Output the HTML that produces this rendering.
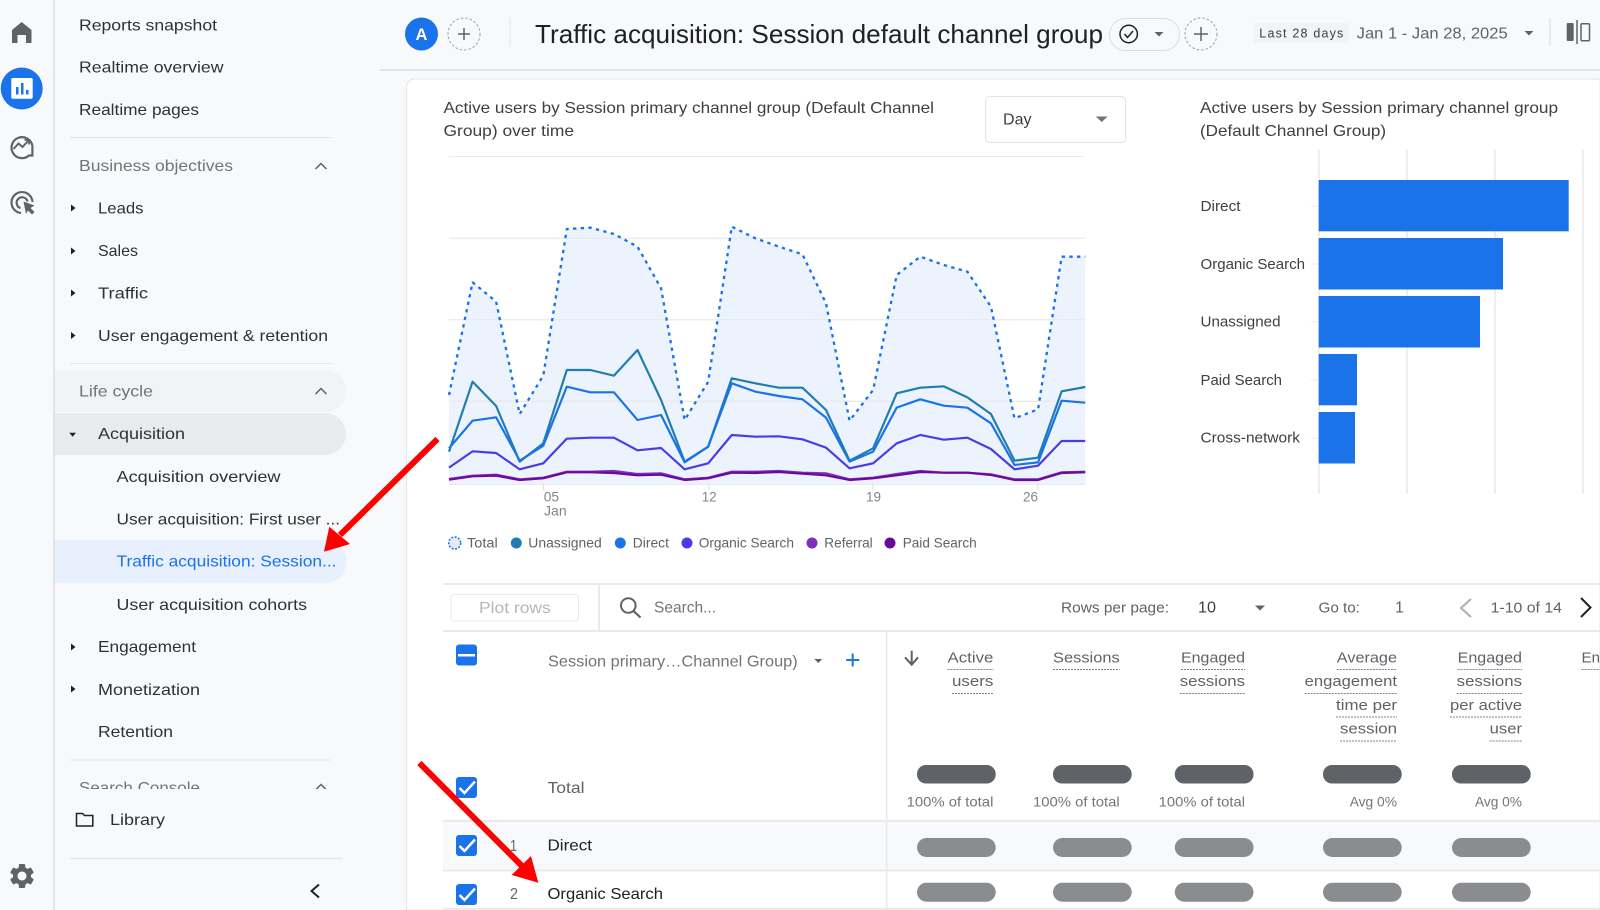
<!DOCTYPE html>
<html lang="en">
<head>
<meta charset="utf-8">
<title>Traffic acquisition</title>
<style>
html,body{margin:0;padding:0;background:#f8f9fb;width:1600px;height:910px;overflow:hidden}
svg{display:block}
text{font-family:"Liberation Sans",sans-serif;white-space:pre}
.s{font-size:16px;fill:#2f3134}
.g{font-size:16px;fill:#70757a}
.c{font-size:16px;fill:#3c4043}
.b{font-size:14.5px;fill:#3c4043}
.l{font-size:14px;fill:#5f6368}
.a{font-size:14px;fill:#80868b}
.t{font-size:15px;fill:#5f6368}
.h{font-size:15px;fill:#5f6368}
.p{font-size:14px;fill:#70757a}
.d{stroke:#80868b;stroke-width:1;stroke-dasharray:2 1}
.r{stroke:#e8eaed;stroke-width:2}
</style>
</head>
<body>
<svg width="1600" height="910" viewBox="0 0 1600 910" xmlns="http://www.w3.org/2000/svg">
<defs>
<clipPath id="sc"><rect x="60" y="770" width="300" height="19"/></clipPath>
</defs>
<rect width="1600" height="910" fill="#f8f9fb"/>

<!-- rail -->
<line x1="54" y1="0" x2="54" y2="910" stroke="#dadce0" stroke-width="1.5"/>
<path d="M21.7 22 L31.5 30 V43 H26 V35 H17.5 V43 H12 V30Z" fill="#5f6368"/>
<circle cx="21.7" cy="88.5" r="21" fill="#1a73e8"/>
<rect x="11.3" y="78" width="21.4" height="20.8" rx="1.5" fill="#fff"/>
<rect x="16" y="87" width="2.5" height="7.5" fill="#1a73e8"/>
<rect x="21" y="83" width="2.5" height="11.5" fill="#1a73e8"/>
<rect x="26" y="90" width="2.5" height="4.5" fill="#1a73e8"/>
<path d="M29 155.5 A10.5 10.5 0 1 1 32.4 146 V155.5 Z" fill="none" stroke="#5f6368" stroke-width="2.2"/>
<path d="M13.5 149 L18.5 143.5 L22.5 147 L28.5 140.5" fill="none" stroke="#5f6368" stroke-width="2"/>
<path d="M24.5 140 H29 V144.5" fill="none" stroke="#5f6368" stroke-width="1.8"/>
<path d="M21 213 A10.5 10.5 0 1 1 32.5 202" fill="none" stroke="#5f6368" stroke-width="2.2"/>
<path d="M20.5 208 A5.5 5.5 0 1 1 27.5 201.5" fill="none" stroke="#5f6368" stroke-width="2.2"/>
<path d="M23.5 201.5 L34.5 205.5 L30.5 208 L34.5 212 L32 214.5 L28 210.5 L26 214Z" fill="#5f6368"/>
<g transform="translate(7 861) scale(1.25)"><path fill="#5f6368" d="M19.14 12.94c.04-.3.06-.61.06-.94 0-.32-.02-.64-.07-.94l2.03-1.58c.18-.14.23-.41.12-.61l-1.92-3.32c-.12-.22-.37-.29-.59-.22l-2.39.96c-.5-.38-1.03-.7-1.62-.94l-.36-2.54c-.04-.24-.24-.41-.48-.41h-3.84c-.24 0-.43.17-.47.41l-.36 2.54c-.59.24-1.13.57-1.62.94l-2.39-.96c-.22-.08-.47 0-.59.22L2.74 8.87c-.12.21-.08.47.12.61l2.03 1.58c-.05.3-.09.63-.09.94s.02.64.07.94l-2.03 1.58c-.18.14-.23.41-.12.61l1.92 3.32c.12.22.37.29.59.22l2.39-.96c.5.38 1.03.7 1.62.94l.36 2.54c.05.24.24.41.48.41h3.84c.24 0 .44-.17.47-.41l.36-2.54c.59-.24 1.13-.56 1.62-.94l2.39.96c.22.08.47 0 .59-.22l1.92-3.32c.12-.22.07-.47-.12-.61l-2.01-1.58zM12 15.6c-1.98 0-3.6-1.62-3.6-3.6s1.62-3.6 3.6-3.6 3.6 1.62 3.6 3.6-1.62 3.6-3.6 3.6z"/></g>

<!-- sidebar highlights -->
<path d="M55 370 H325 A21 21 0 0 1 325 412 H55Z" fill="#f1f3f4"/>
<path d="M55 413 H325 A21 21 0 0 1 325 455 H55Z" fill="#e8eaed"/>
<path d="M55 540 H325 A21.5 21.5 0 0 1 325 583 H55Z" fill="#e8f0fe"/>

<!-- sidebar text -->
<text class="s" x="79" y="30.5" textLength="138" lengthAdjust="spacingAndGlyphs">Reports snapshot</text>
<text class="s" x="79" y="72.7" textLength="144.5" lengthAdjust="spacingAndGlyphs">Realtime overview</text>
<text class="s" x="79" y="115" textLength="120" lengthAdjust="spacingAndGlyphs">Realtime pages</text>
<line x1="70" y1="137.5" x2="331" y2="137.5" stroke="#e3e5e8" stroke-width="1"/>
<text class="g" x="79" y="171" textLength="154" lengthAdjust="spacingAndGlyphs">Business objectives</text>
<polyline points="315.5,169 321,163.5 326.5,169" fill="none" stroke="#5f6368" stroke-width="1.5"/>
<path d="M71 204.5 L75.5 208 L71 211.5Z M71 247.5 L75.5 251 L71 254.5Z M71 289.5 L75.5 293 L71 296.5Z M71 332 L75.5 335.5 L71 339Z M71 643.5 L75.5 647 L71 650.5Z M71 685.5 L75.5 689 L71 692.5Z" fill="#202124"/>
<text class="s" x="98" y="213.5" textLength="45.5" lengthAdjust="spacingAndGlyphs">Leads</text>
<text class="s" x="98" y="256" textLength="40" lengthAdjust="spacingAndGlyphs">Sales</text>
<text class="s" x="98" y="298.5" textLength="50" lengthAdjust="spacingAndGlyphs">Traffic</text>
<text class="s" x="98" y="341" textLength="230" lengthAdjust="spacingAndGlyphs">User engagement &amp; retention</text>
<line x1="70" y1="363.5" x2="331" y2="363.5" stroke="#e3e5e8" stroke-width="1"/>
<text class="g" x="79" y="396.7" textLength="74" lengthAdjust="spacingAndGlyphs">Life cycle</text>
<polyline points="315.5,394 321,388.5 326.5,394" fill="none" stroke="#5f6368" stroke-width="1.5"/>
<path d="M69.3 432.7 H76 L72.6 436.7Z" fill="#202124"/>
<text class="s" x="98" y="439" textLength="87" lengthAdjust="spacingAndGlyphs">Acquisition</text>
<text class="s" x="116.5" y="482" textLength="164" lengthAdjust="spacingAndGlyphs">Acquisition overview</text>
<text class="s" x="116.5" y="524.7" textLength="223.5" lengthAdjust="spacingAndGlyphs">User acquisition: First user ...</text>
<text x="116.5" y="566.6" font-size="16" fill="#1a73e8" textLength="220" lengthAdjust="spacingAndGlyphs">Traffic acquisition: Session...</text>
<text class="s" x="116.5" y="610" textLength="190.5" lengthAdjust="spacingAndGlyphs">User acquisition cohorts</text>
<text class="s" x="98" y="652" textLength="98" lengthAdjust="spacingAndGlyphs">Engagement</text>
<text class="s" x="98" y="695" textLength="102" lengthAdjust="spacingAndGlyphs">Monetization</text>
<text class="s" x="98" y="737" textLength="75" lengthAdjust="spacingAndGlyphs">Retention</text>
<line x1="70" y1="760" x2="331" y2="760" stroke="#e3e5e8" stroke-width="1"/>
<g clip-path="url(#sc)">
<text class="g" x="79" y="793" textLength="121" lengthAdjust="spacingAndGlyphs">Search Console</text>
<polyline points="316,789.5 321,784.5 326,789.5" fill="none" stroke="#5f6368" stroke-width="1.5"/>
</g>
<path d="M76.5 813.5 H82.5 L84.5 815.5 H92.8 V826 H76.5Z" fill="none" stroke="#202124" stroke-width="1.5"/>
<text class="s" x="110" y="825" textLength="55" lengthAdjust="spacingAndGlyphs">Library</text>
<line x1="70" y1="858.5" x2="342" y2="858.5" stroke="#e3e5e8" stroke-width="1.2"/>
<polyline points="319,884.5 311.5,891 319,897.5" fill="none" stroke="#202124" stroke-width="2"/>

<!-- header -->
<line x1="380" y1="70" x2="1600" y2="70" stroke="#dadce0" stroke-width="1.5"/>
<circle cx="421.5" cy="34" r="16.5" fill="#1a73e8"/>
<text x="421.5" y="39.8" font-size="16.5" font-weight="bold" fill="#fff" text-anchor="middle">A</text>
<circle cx="464" cy="34" r="16" fill="none" stroke="#9aa0a6" stroke-width="1" stroke-dasharray="2.5 2"/>
<path d="M458 34 H470 M464 28 V40" stroke="#5f6368" stroke-width="1.5" fill="none"/>
<line x1="510" y1="18" x2="510" y2="46" stroke="#e3e5e8" stroke-width="1"/>
<text x="535" y="43" font-size="26" fill="#202124" textLength="568" lengthAdjust="spacingAndGlyphs">Traffic acquisition: Session default channel group</text>
<rect x="1109.5" y="18.5" width="70" height="32" rx="16" fill="#f8f9fb" stroke="#dadce0"/>
<circle cx="1128.7" cy="34" r="8.7" fill="none" stroke="#202124" stroke-width="1.5"/>
<polyline points="1124.5,34 1127.5,37.5 1133,31" fill="none" stroke="#202124" stroke-width="1.5"/>
<path d="M1154.5 32 H1163.5 L1159 36.5Z" fill="#5f6368"/>
<circle cx="1201" cy="34" r="16" fill="none" stroke="#9aa0a6" stroke-width="1" stroke-dasharray="2.5 2"/>
<path d="M1194 34 H1208 M1201 27 V41" stroke="#5f6368" stroke-width="1.5" fill="none"/>
<rect x="1254" y="23" width="95" height="20" fill="#f1f3f4"/>
<text x="1259.3" y="37.7" font-size="12.5" fill="#3c4043" textLength="84" lengthAdjust="spacing">Last 28 days</text>
<text x="1356.7" y="38.7" font-size="16" fill="#5f6368" textLength="151" lengthAdjust="spacingAndGlyphs">Jan 1 - Jan 28, 2025</text>
<path d="M1524.5 31 H1533.5 L1529 35.5Z" fill="#5f6368"/>
<line x1="1550" y1="18" x2="1550" y2="46" stroke="#dadce0" stroke-width="1"/>
<rect x="1566.7" y="23" width="7" height="18" rx="1" fill="#5f6368"/>
<line x1="1577" y1="20" x2="1577" y2="44" stroke="#5f6368" stroke-width="1.5"/>
<rect x="1581" y="23.7" width="8.5" height="17" rx="1" fill="none" stroke="#5f6368" stroke-width="1.5"/>

<!-- card -->
<path d="M406.5 910 V87 A8 8 0 0 1 414.5 79 H1600 V910Z" fill="#fff" stroke="#e3e5e8" stroke-width="1"/>
<text class="c" x="443.5" y="113" textLength="490.5" lengthAdjust="spacingAndGlyphs">Active users by Session primary channel group (Default Channel</text>
<text class="c" x="443.5" y="136" textLength="130.5" lengthAdjust="spacingAndGlyphs">Group) over time</text>
<rect x="985.5" y="96.5" width="140" height="46" rx="4" fill="#fff" stroke="#e0e2e5"/>
<text class="c" x="1003" y="124.3" textLength="28.5" lengthAdjust="spacingAndGlyphs">Day</text>
<path d="M1095.7 116.5 H1107.7 L1101.7 122Z" fill="#70757a"/>
<line x1="449" y1="156.5" x2="1084" y2="156.5" stroke="#e8eaed" stroke-width="1"/>

<!-- line chart (coords in zoomed space) -->
<g transform="matrix(.33423 0 0 .33333 439.976 210)">
<path fill="#edf3fc" d="M27 555 L97.5 217 168 275 238.5 612 309 497 379.5 57 450 53 520.5 72 591 110 661.5 235 732 630 802.5 515 873 50 943.5 85 1014 110 1084.5 133 1155 280 1225.5 632 1296 540 1366.5 195 1437 140 1507.5 165 1578 185 1648.5 290 1719 625 1789.5 598 1860 140 1930.5 140 V822 H27Z"/>
<g stroke="#e8eaed" stroke-width="4" opacity=".9">
<line x1="27" y1="85" x2="1930" y2="85"/><line x1="27" y1="329" x2="1930" y2="329"/><line x1="27" y1="574" x2="1930" y2="574"/>
</g>
<g fill="none" stroke-linejoin="round">
<polyline stroke="#1a73e8" stroke-width="7" stroke-dasharray="10 13" points="27,555 97.5,217 168,275 238.5,612 309,497 379.5,57 450,53 520.5,72 591,110 661.5,235 732,630 802.5,515 873,50 943.5,85 1014,110 1084.5,133 1155,280 1225.5,632 1296,540 1366.5,195 1437,140 1507.5,165 1578,185 1648.5,290 1719,625 1789.5,598 1860,140 1930.5,140"/>
<polyline stroke="#1f7db0" stroke-width="6.5" points="27,725 97.5,515 168,588 238.5,755 309,700 379.5,480 450,480 520.5,497 591,420 661.5,570 732,755 802.5,710 873,505 943.5,520 1014,533 1084.5,533 1155,600 1225.5,752 1296,715 1366.5,550 1437,533 1507.5,529 1578,562 1648.5,612 1719,752 1789.5,743 1860,544 1930.5,531"/>
<polyline stroke="#1a73e8" stroke-width="6.5" points="27,715 97.5,632 168,622 238.5,752 309,707 379.5,530 450,547 520.5,547 591,630 661.5,615 732,757 802.5,710 873,520 943.5,545 1014,558 1084.5,568 1155,623 1225.5,755 1296,725 1366.5,593 1437,568 1507.5,587 1578,593 1648.5,640 1719,765 1789.5,757 1860,572 1930.5,578"/>
<polyline stroke="#4a3be8" stroke-width="6.5" points="27,773 97.5,724 168,729 238.5,778 309,760 379.5,686 450,683 520.5,683 591,721 661.5,714 732,778 802.5,760 873,675 943.5,680 1014,679 1084.5,688 1155,713 1225.5,775 1296,760 1366.5,700 1437,675 1507.5,689 1578,683 1648.5,717 1719,778 1789.5,767 1860,693 1930.5,693"/>
<polyline stroke="#7b2fbb" stroke-width="6.5" points="27,807 97.5,797 168,794 238.5,808 309,803 379.5,785 450,785 520.5,783 591,792 661.5,790 732,808 802.5,803 873,785 943.5,785 1014,783 1084.5,788 1155,790 1225.5,808 1296,803 1366.5,792 1437,783 1507.5,788 1578,788 1648.5,793 1719,808 1789.5,808 1860,787 1930.5,785"/>
<polyline stroke="#6a0a9c" stroke-width="6.5" points="27,809 97.5,799 168,797 238.5,810 309,805 379.5,787 450,787 520.5,789 591,796 661.5,794 732,810 802.5,805 873,788 943.5,789 1014,786 1084.5,791 1155,796 1225.5,810 1296,805 1366.5,796 1437,786 1507.5,788 1578,788 1648.5,795 1719,810 1789.5,810 1860,789 1930.5,787"/>
</g>
</g>
<line x1="449" y1="484.5" x2="1085" y2="484.5" stroke="#e8eaed" stroke-width="1"/>
<path d="M543.5 484 V490 M709 484 V490 M873 484 V490 M1038 484 V490" stroke="#dadce0" stroke-width="1"/>
<text class="a" x="543.7" y="501.7" textLength="15.3" lengthAdjust="spacingAndGlyphs">05</text>
<text class="a" x="544" y="515.7" textLength="22.7" lengthAdjust="spacingAndGlyphs">Jan</text>
<text class="a" x="701.7" y="501.7" textLength="15" lengthAdjust="spacingAndGlyphs">12</text>
<text class="a" x="866" y="501.7" textLength="15" lengthAdjust="spacingAndGlyphs">19</text>
<text class="a" x="1023" y="501.7" textLength="15" lengthAdjust="spacingAndGlyphs">26</text>

<!-- legend -->
<circle cx="454.7" cy="543" r="6" fill="#e8eaed" stroke="#1a73e8" stroke-width="1.5" stroke-dasharray="2 1.5"/>
<text class="l" x="467" y="547.7" textLength="30.7" lengthAdjust="spacingAndGlyphs">Total</text>
<circle cx="516.3" cy="543" r="5.5" fill="#1f7db0"/>
<text class="l" x="528.3" y="547.7" textLength="73.4" lengthAdjust="spacingAndGlyphs">Unassigned</text>
<circle cx="620.3" cy="543" r="5.5" fill="#1a73e8"/>
<text class="l" x="632.7" y="547.7" textLength="36.3" lengthAdjust="spacingAndGlyphs">Direct</text>
<circle cx="687" cy="543" r="5.5" fill="#4a3be8"/>
<text class="l" x="698.7" y="547.7" textLength="95.3" lengthAdjust="spacingAndGlyphs">Organic Search</text>
<circle cx="812" cy="543" r="5.5" fill="#7b2fbb"/>
<text class="l" x="824.3" y="547.7" textLength="48.4" lengthAdjust="spacingAndGlyphs">Referral</text>
<circle cx="890" cy="543" r="5.5" fill="#6a0a9c"/>
<text class="l" x="902.7" y="547.7" textLength="74" lengthAdjust="spacingAndGlyphs">Paid Search</text>

<!-- bar chart -->
<text class="c" x="1200" y="113" textLength="358" lengthAdjust="spacingAndGlyphs">Active users by Session primary channel group</text>
<text class="c" x="1200" y="136" textLength="186" lengthAdjust="spacingAndGlyphs">(Default Channel Group)</text>
<path d="M1319 150 V494 M1407 150 V494 M1495 150 V494 M1583 150 V494" stroke="#e8e8e8" stroke-width="1.5"/>
<path d="M1311 206 H1319 M1311 264 H1319 M1311 322 H1319 M1311 380 H1319 M1311 438 H1319" stroke="#e8eaed" stroke-width="1"/>
<g fill="#1a73e8">
<rect x="1318.7" y="180" width="250" height="51.3"/>
<rect x="1318.7" y="238" width="184.3" height="51.5"/>
<rect x="1318.7" y="296" width="161.3" height="51.5"/>
<rect x="1318.7" y="354" width="38.3" height="51.3"/>
<rect x="1318.7" y="412" width="36.3" height="51.5"/>
</g>
<text class="b" x="1200.5" y="211" textLength="40" lengthAdjust="spacingAndGlyphs">Direct</text>
<text class="b" x="1200.5" y="269" textLength="104.5" lengthAdjust="spacingAndGlyphs">Organic Search</text>
<text class="b" x="1200.5" y="326.7" textLength="80" lengthAdjust="spacingAndGlyphs">Unassigned</text>
<text class="b" x="1200.5" y="385" textLength="81.5" lengthAdjust="spacingAndGlyphs">Paid Search</text>
<text class="b" x="1200.5" y="442.7" textLength="99.5" lengthAdjust="spacingAndGlyphs">Cross-network</text>

<!-- table toolbar -->
<line x1="443" y1="584" x2="1600" y2="584" class="r"/>
<line x1="443" y1="631" x2="1600" y2="631" class="r"/>
<line x1="599" y1="585" x2="599" y2="630" class="r"/>
<rect x="451" y="594.5" width="127.5" height="26.5" rx="3" fill="#fff" stroke="#e8eaed"/>
<text x="479" y="612.8" font-size="16" fill="#b4b6ba" textLength="71.7" lengthAdjust="spacingAndGlyphs">Plot rows</text>
<circle cx="628.3" cy="605.5" r="7.3" fill="none" stroke="#5f6368" stroke-width="2"/>
<line x1="633.5" y1="611" x2="640.5" y2="617.5" stroke="#5f6368" stroke-width="2.2"/>
<text x="654" y="612.6" font-size="16" fill="#70757a" textLength="62" lengthAdjust="spacingAndGlyphs">Search...</text>
<text class="t" x="1061" y="612.4" textLength="108" lengthAdjust="spacingAndGlyphs">Rows per page:</text>
<text x="1198" y="612.6" font-size="16" fill="#3c4043" textLength="18" lengthAdjust="spacingAndGlyphs">10</text>
<path d="M1255 605.5 H1265 L1260 610.5Z" fill="#5f6368"/>
<text class="t" x="1318.5" y="612.4" textLength="41.5" lengthAdjust="spacingAndGlyphs">Go to:</text>
<text x="1395" y="612.6" font-size="16" fill="#5f6368">1</text>
<polyline points="1471,599 1461,608 1471,617" fill="none" stroke="#a9adb2" stroke-width="2"/>
<text class="t" x="1490.6" y="612.4" textLength="71.4" lengthAdjust="spacingAndGlyphs">1-10 of 14</text>
<polyline points="1581,598 1590.5,607.5 1581,617" fill="none" stroke="#202124" stroke-width="2"/>

<!-- table header -->
<line x1="886.7" y1="631" x2="886.7" y2="910" stroke="#e8eaed" stroke-width="1.5"/>
<rect x="456" y="644.5" width="21" height="21" rx="3" fill="#1a73e8"/>
<rect x="458" y="654" width="17" height="2.5" fill="#fff"/>
<text class="g" x="548" y="666.7" textLength="249.7" lengthAdjust="spacingAndGlyphs">Session primary…Channel Group)</text>
<path d="M814.3 659 H822.3 L818.3 663Z" fill="#5f6368"/>
<path d="M846.2 660 H859.2 M852.7 653.5 V666.5" stroke="#1a73e8" stroke-width="2" fill="none"/>
<path d="M911.7 650.7 V664.5 M905 657.3 L911.7 664.7 L918 657.3" stroke="#5f6368" stroke-width="2" fill="none"/>

<text class="h" x="947.5" y="662.4" textLength="45.9" lengthAdjust="spacingAndGlyphs">Active</text>
<line x1="947.5" y1="669.5" x2="993.4" y2="669.5" class="d"/>
<text class="h" x="952" y="686.2" textLength="41.4" lengthAdjust="spacingAndGlyphs">users</text>
<line x1="952" y1="693.5" x2="993.4" y2="693.5" class="d"/>
<text class="h" x="1053" y="662.4" textLength="66.7" lengthAdjust="spacingAndGlyphs">Sessions</text>
<line x1="1053" y1="669.5" x2="1119.7" y2="669.5" class="d"/>
<text class="h" x="1181" y="662.4" textLength="64" lengthAdjust="spacingAndGlyphs">Engaged</text>
<line x1="1181" y1="669.5" x2="1245" y2="669.5" class="d"/>
<text class="h" x="1179.8" y="686.2" textLength="65.2" lengthAdjust="spacingAndGlyphs">sessions</text>
<line x1="1179.8" y1="693.5" x2="1245" y2="693.5" class="d"/>
<text class="h" x="1336.8" y="662.4" textLength="60.2" lengthAdjust="spacingAndGlyphs">Average</text>
<line x1="1336.8" y1="669.5" x2="1397" y2="669.5" class="d"/>
<text class="h" x="1304.7" y="686.2" textLength="92.3" lengthAdjust="spacingAndGlyphs">engagement</text>
<line x1="1304.7" y1="693.5" x2="1397" y2="693.5" class="d"/>
<text class="h" x="1336" y="710.2" textLength="61" lengthAdjust="spacingAndGlyphs">time per</text>
<line x1="1336" y1="717" x2="1397" y2="717" class="d"/>
<text class="h" x="1340" y="733.5" textLength="57" lengthAdjust="spacingAndGlyphs">session</text>
<line x1="1340" y1="741" x2="1397" y2="741" class="d"/>
<text class="h" x="1457.6" y="662.4" textLength="64.4" lengthAdjust="spacingAndGlyphs">Engaged</text>
<line x1="1457.6" y1="669.5" x2="1522" y2="669.5" class="d"/>
<text class="h" x="1456.7" y="686.2" textLength="65.3" lengthAdjust="spacingAndGlyphs">sessions</text>
<line x1="1456.7" y1="693.5" x2="1522" y2="693.5" class="d"/>
<text class="h" x="1450" y="710.2" textLength="72" lengthAdjust="spacingAndGlyphs">per active</text>
<line x1="1450" y1="717" x2="1522" y2="717" class="d"/>
<text class="h" x="1489.7" y="733.5" textLength="32.3" lengthAdjust="spacingAndGlyphs">user</text>
<line x1="1489.7" y1="741" x2="1522" y2="741" class="d"/>
<text class="h" x="1581.5" y="662.4" textLength="18.5" lengthAdjust="spacingAndGlyphs">En</text>
<line x1="1581.5" y1="669.5" x2="1600" y2="669.5" class="d"/>

<!-- total row -->
<g fill="#5f6368">
<rect x="917" y="765" width="78.7" height="18.5" rx="9"/>
<rect x="1053" y="765" width="78.7" height="18.5" rx="9"/>
<rect x="1174.8" y="765" width="78.7" height="18.5" rx="9"/>
<rect x="1323" y="765" width="78.7" height="18.5" rx="9"/>
<rect x="1452" y="765" width="78.7" height="18.5" rx="9"/>
</g>
<text class="p" x="906.6" y="806.7" textLength="86.8" lengthAdjust="spacingAndGlyphs">100% of total</text>
<text class="p" x="1033" y="806.7" textLength="86.7" lengthAdjust="spacingAndGlyphs">100% of total</text>
<text class="p" x="1158.7" y="806.7" textLength="86.3" lengthAdjust="spacingAndGlyphs">100% of total</text>
<text class="p" x="1349.7" y="806.7" textLength="47.3" lengthAdjust="spacingAndGlyphs">Avg 0%</text>
<text class="p" x="1475" y="806.7" textLength="47" lengthAdjust="spacingAndGlyphs">Avg 0%</text>
<rect x="456" y="777" width="21" height="21" rx="3" fill="#1a73e8"/>
<polyline points="459.5,788 464.5,793 475,781.5" fill="none" stroke="#fff" stroke-width="2.5"/>
<text x="547.5" y="793" font-size="16" fill="#5f6368" textLength="37" lengthAdjust="spacingAndGlyphs">Total</text>

<!-- rows -->
<rect x="443" y="821" width="1157" height="49" fill="#f8f9fa"/>
<line x1="443" y1="821" x2="1600" y2="821" class="r"/>
<line x1="443" y1="870.5" x2="1600" y2="870.5" class="r"/>
<line x1="443" y1="908.5" x2="1600" y2="908.5" stroke="#e8eaed" stroke-width="1.5"/>
<line x1="886.7" y1="821" x2="886.7" y2="908" stroke="#e8eaed" stroke-width="1.5"/>
<rect x="456" y="835" width="21" height="21" rx="3" fill="#1a73e8"/>
<polyline points="459.5,846 464.5,851 475,839.5" fill="none" stroke="#fff" stroke-width="2.5"/>
<rect x="456" y="884" width="21" height="21" rx="3" fill="#1a73e8"/>
<polyline points="459.5,895 464.5,900 475,888.5" fill="none" stroke="#fff" stroke-width="2.5"/>
<text x="510" y="851" font-size="16" fill="#5f6368" textLength="7" lengthAdjust="spacingAndGlyphs">1</text>
<text x="510" y="899" font-size="16" fill="#5f6368" textLength="8" lengthAdjust="spacingAndGlyphs">2</text>
<text x="547.5" y="850.5" font-size="16" fill="#202124" textLength="44.5" lengthAdjust="spacingAndGlyphs">Direct</text>
<text x="547.5" y="899" font-size="16" fill="#202124" textLength="115.5" lengthAdjust="spacingAndGlyphs">Organic Search</text>
<g fill="#8a8c8f">
<rect x="917" y="838" width="78.7" height="19" rx="9.5"/>
<rect x="1053" y="838" width="78.7" height="19" rx="9.5"/>
<rect x="1174.8" y="838" width="78.7" height="19" rx="9.5"/>
<rect x="1323" y="838" width="78.7" height="19" rx="9.5"/>
<rect x="1452" y="838" width="78.7" height="19" rx="9.5"/>
<rect x="917" y="882.7" width="78.7" height="19" rx="9.5"/>
<rect x="1053" y="882.7" width="78.7" height="19" rx="9.5"/>
<rect x="1174.8" y="882.7" width="78.7" height="19" rx="9.5"/>
<rect x="1323" y="882.7" width="78.7" height="19" rx="9.5"/>
<rect x="1452" y="882.7" width="78.7" height="19" rx="9.5"/>
</g>

<!-- red arrows -->
<line x1="437.5" y1="439" x2="340" y2="535" stroke="#f00" stroke-width="6"/>
<polygon points="329.3,526.7 350,544 324,551.7" fill="#f00"/>
<line x1="419.4" y1="763" x2="521.7" y2="865.7" stroke="#f00" stroke-width="6"/>
<polygon points="531,856 511.7,875 538.3,882.7" fill="#f00"/>
</svg>
</body>
</html>
